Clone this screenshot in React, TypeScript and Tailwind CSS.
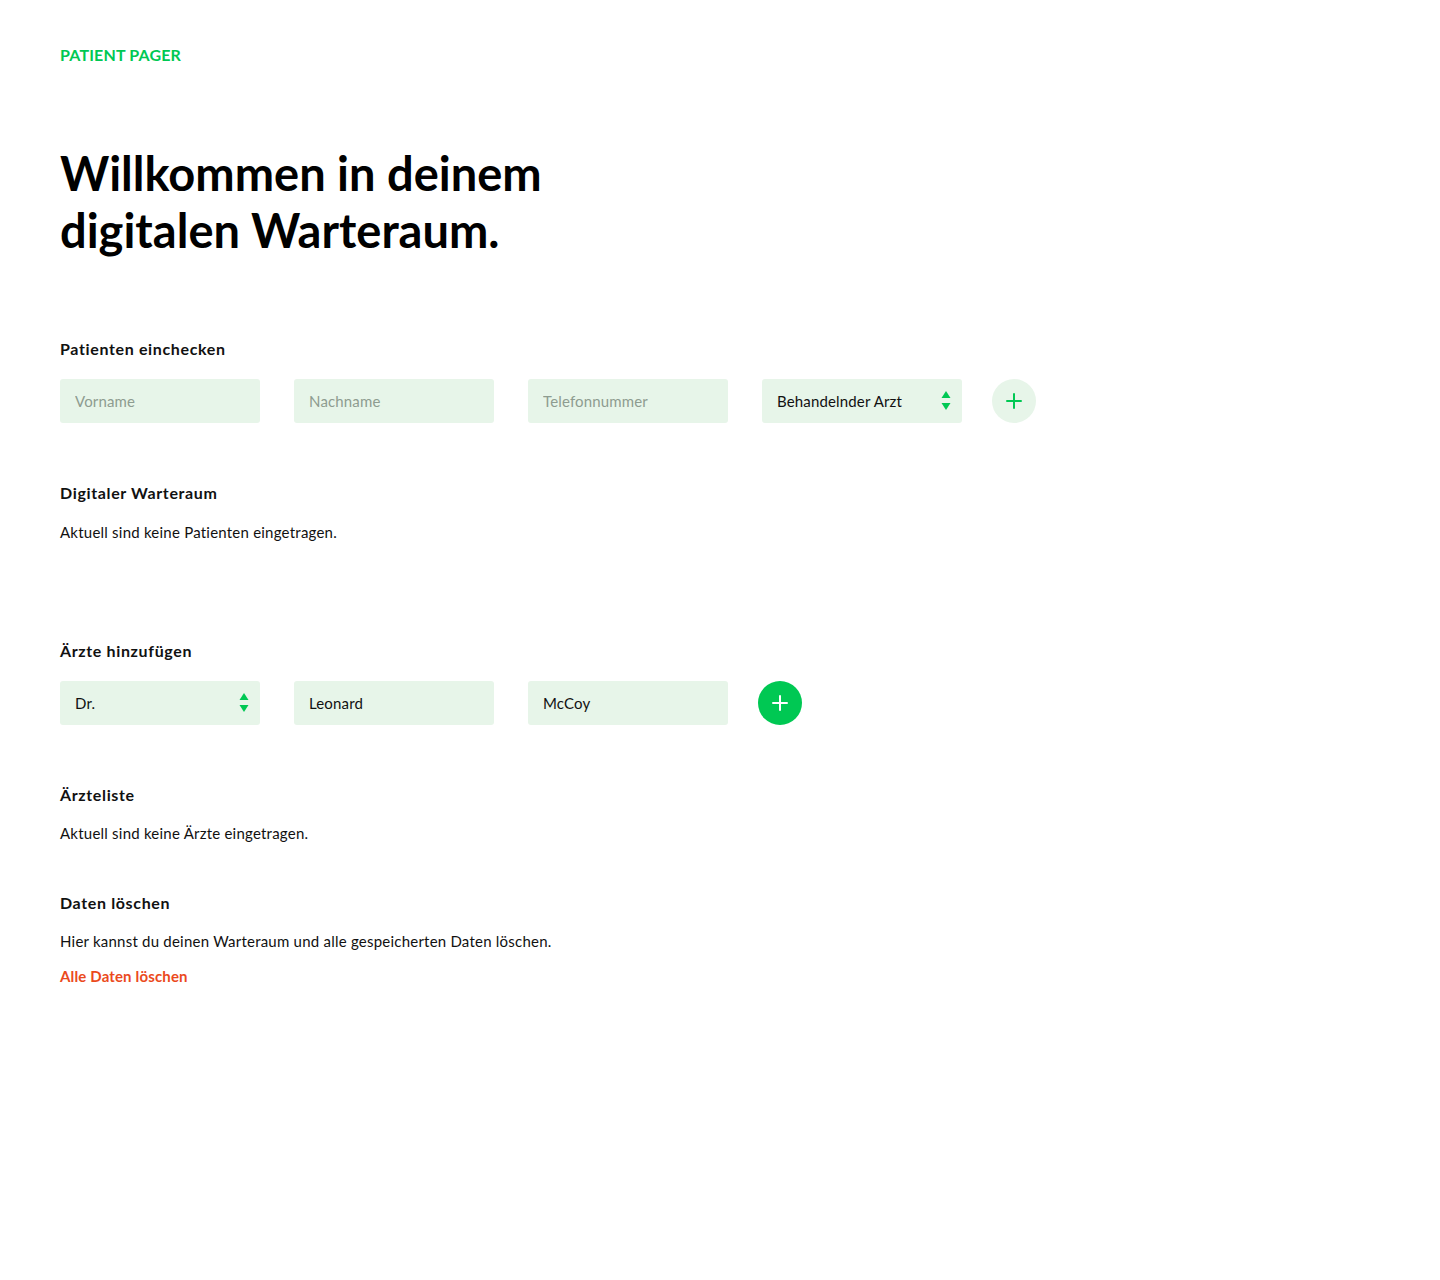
import { Plus } from "lucide-react";

const font = { fontFamily: "Lato, 'Open Sans', sans-serif" };

function Field({ placeholder, value }: { placeholder: string; value?: string }) {
  return (
    <input
      className="h-[44px] w-[200px] rounded-[3px] bg-[#e7f5e9] px-[15px] text-[15px] tracking-[0.01em] text-[#111] outline-none placeholder:text-[#8e9c90]"
      placeholder={placeholder}
      defaultValue={value}
      style={font}
    />
  );
}

function SelectBox({ label }: { label: string }) {
  return (
    <div className="flex h-[44px] w-[200px] items-center justify-between rounded-[3px] bg-[#e7f5e9] pl-[15px] pr-[10px] text-[15px] tracking-[0.01em] text-[#111]">
      <span>{label}</span>
      <svg width="12" height="22" viewBox="0 0 12 22" className="text-[#00c853]">
        <path d="M6 1 L10.5 8 L1.5 8 Z" fill="currentColor" />
        <path d="M1.5 13 L10.5 13 L6 20 Z" fill="currentColor" />
      </svg>
    </div>
  );
}

function SectionTitle({ children, className = "" }: { children: React.ReactNode; className?: string }) {
  return (
    <h2 className={`text-[16px] font-bold leading-[20px] tracking-[0.04em] text-[#111] ${className}`}>
      {children}
    </h2>
  );
}

export default function App() {
  return (
    <div className="min-h-[1280px] bg-white px-[60px] pt-[45px] text-[#111]" style={font}>
      <p className="text-[16px] font-bold leading-[20px] tracking-[0.01em] text-[#00c853]">PATIENT PAGER</p>

      <h1 className="mt-[80px] text-[47px] font-bold leading-[57px] text-black">
        Willkommen in deinem
        <br />
        digitalen Warteraum.
      </h1>

      <SectionTitle className="mt-[80px]">Patienten einchecken</SectionTitle>
      <div className="mt-[20px] flex items-center">
        <div className="flex gap-[34px]">
          <Field placeholder="Vorname" />
          <Field placeholder="Nachname" />
          <Field placeholder="Telefonnummer" />
          <SelectBox label="Behandelnder Arzt" />
        </div>
        <button className="ml-[30px] flex h-[44px] w-[44px] items-center justify-center rounded-full bg-[#e7f5e9] text-[#00c853]">
          <Plus size={24} strokeWidth={2} />
        </button>
      </div>

      <SectionTitle className="mt-[60px]">Digitaler Warteraum</SectionTitle>
      <p className="mt-[19px] text-[15px] leading-[20px] tracking-[0.015em]">
        Aktuell sind keine Patienten eingetragen.
      </p>

      <SectionTitle className="mt-[99px]">Ärzte hinzufügen</SectionTitle>
      <div className="mt-[20px] flex items-center">
        <div className="flex gap-[34px]">
          <SelectBox label="Dr." />
          <Field placeholder="Vorname" value="Leonard" />
          <Field placeholder="Nachname" value="McCoy" />
        </div>
        <button className="ml-[30px] flex h-[44px] w-[44px] items-center justify-center rounded-full bg-[#00c853] text-white">
          <Plus size={24} strokeWidth={2} />
        </button>
      </div>

      <SectionTitle className="mt-[60px]">Ärzteliste</SectionTitle>
      <p className="mt-[18px] text-[15px] leading-[20px] tracking-[0.015em]">
        Aktuell sind keine Ärzte eingetragen.
      </p>

      <SectionTitle className="mt-[50px]">Daten löschen</SectionTitle>
      <p className="mt-[18px] text-[15px] leading-[20px] tracking-[0.015em]">
        Hier kannst du deinen Warteraum und alle gespeicherten Daten löschen.
      </p>
      <button className="mt-[15px] block text-[15px] font-bold leading-[20px] tracking-[0.01em] text-[#eb4a1c]">
        Alle Daten löschen
      </button>
    </div>
  );
}
